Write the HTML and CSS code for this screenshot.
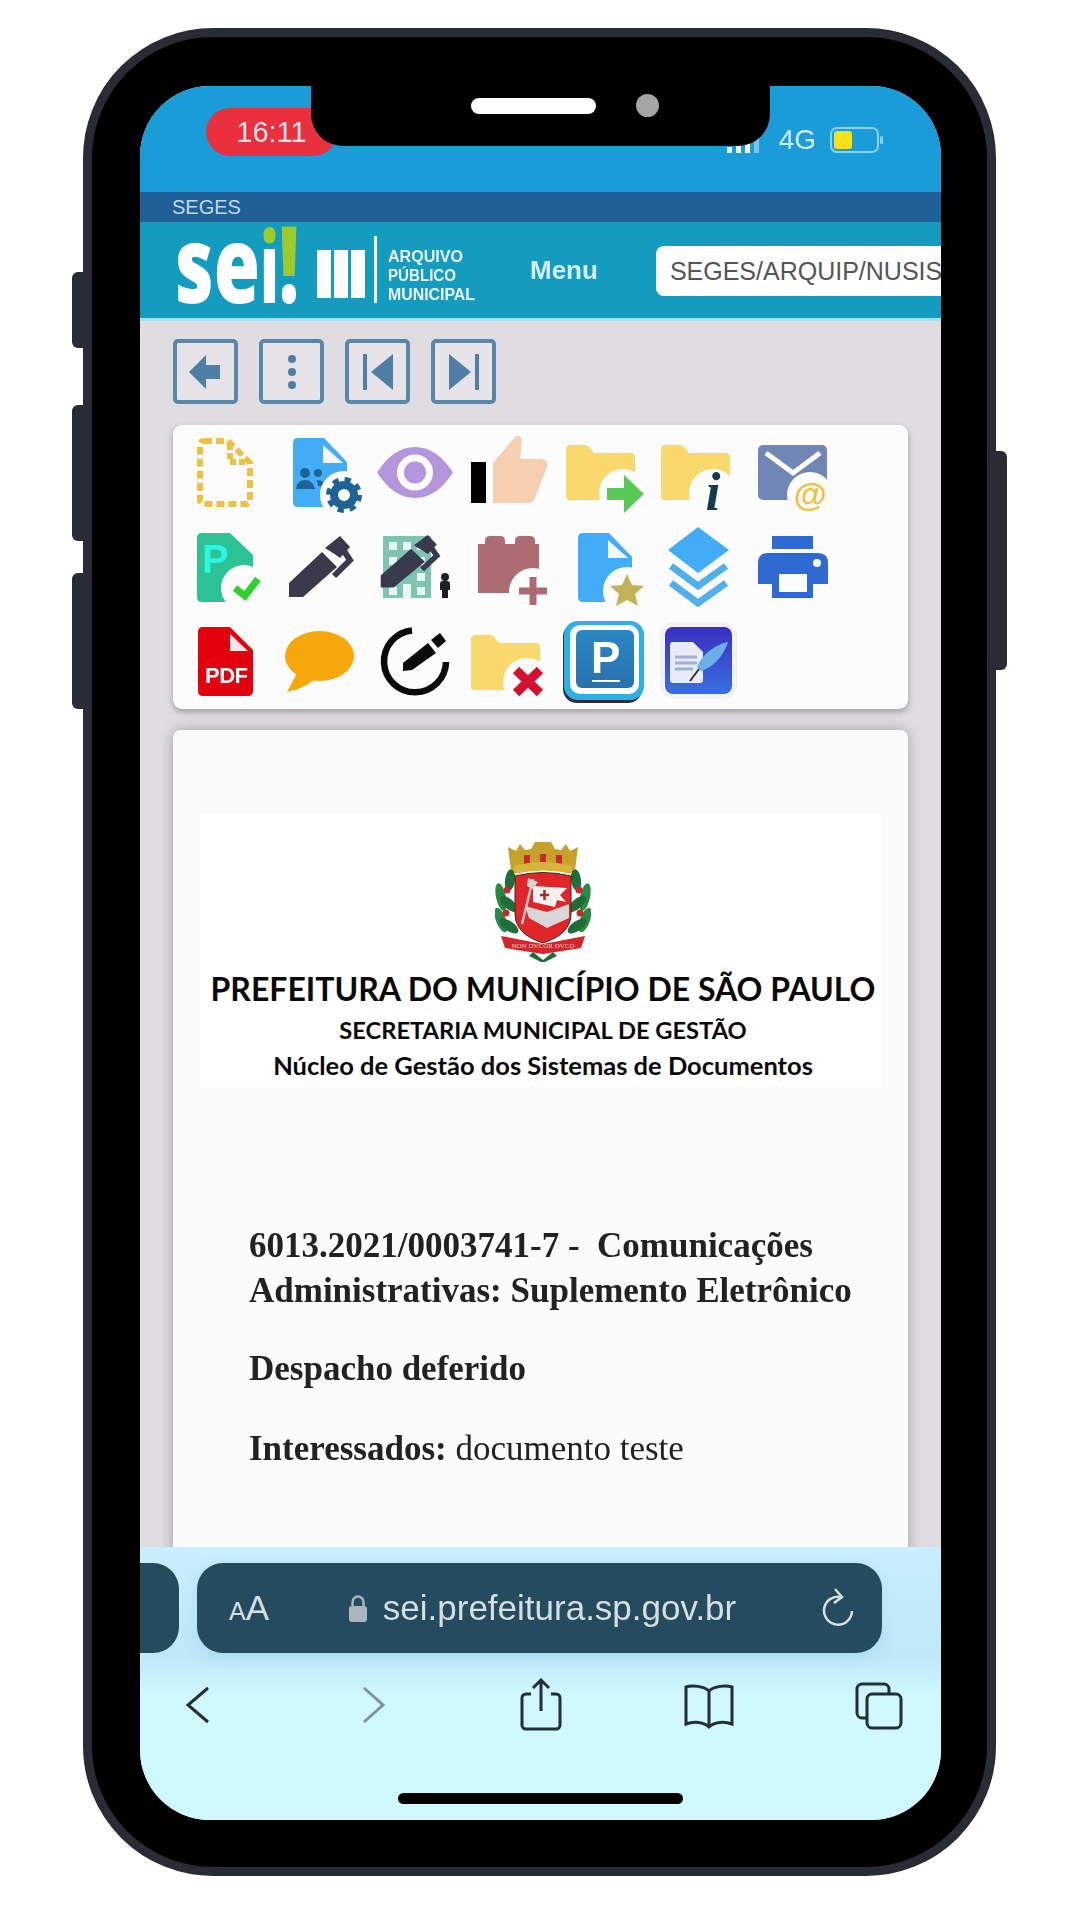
FILE: index.html
```html
<!DOCTYPE html>
<html lang="pt-BR">
<head>
  <meta charset="UTF-8">
  <meta name="viewport" content="width=device-width, initial-scale=1.0">
  <title>SEI - Prefeitura de São Paulo</title>
  <link rel="stylesheet" href="styles.css">
</head>
<body>
<svg class="defs">
  <defs>
    <g id="folder">
      <path d="M8 20q0-4 4-4H27q3 0 5 3l4 5H73q4 0 4 4V67q0 4-4 4H12q-4 0-4-4Z" fill="#f9d96c"/>
    </g>
    <g id="doc-blue">
      <path d="M20 14q0-5 5-5H51L74 33V73q0 5-5 5H25q-5 0-5-5Z" fill="#42acf7"/>
      <path d="M50 16 70 34H50Z" fill="#f4f8fd"/>
    </g>
    <g id="pen">
      <path d="M16 61 49 30 64 45 30 75H16Z" fill="#393a4b"/>
      <path d="M52 26 67 14 77 25 67 36 63 33Z" fill="#393a4b"/>
      <path d="M71 29 77 38 61 54" fill="none" stroke="#393a4b" stroke-width="6"/>
    </g>
    <g id="leaves">
      <ellipse cx="15" cy="38" rx="5" ry="11" fill="#1f6e3a" transform="rotate(8 15 38)"/>
      <ellipse cx="6" cy="55" rx="5" ry="14" fill="#2a8a45" transform="rotate(-12 6 55)"/>
      <ellipse cx="14" cy="62" rx="5" ry="11" fill="#1f6e3a" transform="rotate(-50 14 62)"/>
      <ellipse cx="6" cy="78" rx="5" ry="13" fill="#2a8a45" transform="rotate(-20 6 78)"/>
      <ellipse cx="14" cy="84" rx="5" ry="11" fill="#1f6e3a" transform="rotate(-55 14 84)"/>
      <circle cx="12" cy="48" r="3.500" fill="#c8282c"/>
      <circle cx="11" cy="71" r="3.500" fill="#c8282c"/>
    </g>
  </defs>
</svg>

<div class="phone">
  <span class="side-btn btn-mute"></span>
  <span class="side-btn btn-vol-up"></span>
  <span class="side-btn btn-vol-down"></span>
  <span class="side-btn btn-power"></span>

  <div class="screen">
    <div class="notch">
      <span class="speaker"></span>
      <span class="camera"></span>
    </div>

    <div class="status-bar">
      <span class="time-pill">16:11</span>
      <div class="status-right">
        <svg class="signal" width="38" height="26" viewBox="0 0 38 26">
          <rect x="0" y="20" width="5" height="6" fill="#e8f4fa"/>
          <rect x="9" y="16" width="5" height="10" fill="#e8f4fa"/>
          <rect x="18" y="11" width="5" height="15" fill="#e8f4fa"/>
          <rect x="27" y="5" width="5" height="21" fill="#7cc4e6"/>
        </svg>
        <span class="net">4G</span>
        <svg class="battery" width="54" height="26" viewBox="0 0 54 26">
          <rect x="1" y="1" width="47" height="24" rx="6" fill="none" stroke="#8fcfe8" stroke-width="2"/>
          <rect x="4" y="4" width="18" height="18" rx="3" fill="#f6e11c"/>
          <rect x="50" y="9" width="3" height="8" rx="1.500" fill="#8fcfe8"/>
        </svg>
      </div>
    </div>

    <div class="org-bar">SEGES</div>

    <header class="site-header">
      <svg class="logo" width="300" height="80" viewBox="0 0 300 80">
        <defs>
          <linearGradient id="iFill" gradientUnits="userSpaceOnUse" x1="0" y1="0" x2="0" y2="80">
            <stop offset="0.23" stop-color="#9dcb2a"/>
            <stop offset="0.23" stop-color="#fff"/>
          </linearGradient>
          <linearGradient id="bangFill" gradientUnits="userSpaceOnUse" x1="0" y1="0" x2="0" y2="80">
            <stop offset="0.71" stop-color="#9dcb2a"/>
            <stop offset="0.71" stop-color="#fff"/>
          </linearGradient>
        </defs>
        <text x="-1" y="76" class="logo-sei" fill="#fff" textLength="85" lengthAdjust="spacingAndGlyphs">se</text>
        <text x="84" y="76" class="logo-sei logo-i" fill="url(#iFill)" textLength="19" lengthAdjust="spacingAndGlyphs">i</text>
        <text x="103" y="76" class="logo-sei" fill="url(#bangFill)" textLength="20" lengthAdjust="spacingAndGlyphs">!</text>
        <rect x="141" y="23" width="14" height="48" fill="#fff"/>
        <rect x="158" y="23" width="14" height="48" fill="#fff"/>
        <rect x="175" y="23" width="14" height="48" fill="#fff"/>
        <rect x="198" y="9" width="3" height="67" fill="#fff"/>
        <text x="212" y="35" class="logo-sub" textLength="75" lengthAdjust="spacingAndGlyphs">ARQUIVO</text>
        <text x="212" y="54" class="logo-sub" textLength="68" lengthAdjust="spacingAndGlyphs">PÚBLICO</text>
        <text x="212" y="73" class="logo-sub" textLength="87" lengthAdjust="spacingAndGlyphs">MUNICIPAL</text>
      </svg>
      <span class="menu-link">Menu</span>
      <div class="unit-select">SEGES/ARQUIP/NUSIS</div>
    </header>

    <main class="content">
      <nav class="nav-btns">
        <a class="nav-btn">
          <svg width="40" height="40" viewBox="0 0 40 40"><path d="M3 20 20 3V13H34V27H20V37Z" fill="#4f7fa6"/></svg>
        </a>
        <a class="nav-btn">
          <svg width="40" height="40" viewBox="0 0 40 40"><circle cx="20" cy="7" r="4" fill="#4f7fa6"/><circle cx="20" cy="20" r="4" fill="#4f7fa6"/><circle cx="20" cy="33" r="4" fill="#4f7fa6"/></svg>
        </a>
        <a class="nav-btn">
          <svg width="40" height="40" viewBox="0 0 40 40"><rect x="5" y="2" width="4" height="36" fill="#4f7fa6"/><path d="M35 2V38L13 20Z" fill="#4f7fa6"/></svg>
        </a>
        <a class="nav-btn">
          <svg width="40" height="40" viewBox="0 0 40 40"><path d="M5 2V38L27 20Z" fill="#4f7fa6"/><rect x="31" y="2" width="4" height="36" fill="#4f7fa6"/></svg>
        </a>
      </nav>

      <section class="toolbar">
        <svg class="tool" viewBox="0 0 95 93"><path d="M26 12H50L72 34V71q0 4-4 4H26q-4 0-4-4V16q0-4 4-4Z" fill="none" stroke="#eec23f" stroke-width="6" stroke-dasharray="8 4"/><path d="M52 15V33H69" fill="none" stroke="#eec23f" stroke-width="6" stroke-dasharray="6 3"/></svg>

        <svg class="tool" viewBox="0 0 95 93">
          <use href="#doc-blue"/>
          <circle cx="32" cy="44" r="5" fill="#1f6396"/><circle cx="45" cy="44" r="4" fill="#1f6396"/>
          <path d="M23 60q1-9 9-9t10 9ZM44 51q7 0 9 6H45Z" fill="#1f6396"/>
          <circle cx="71" cy="66" r="24" fill="#fcfcfd"/>
          <circle cx="71" cy="66" r="10" fill="none" stroke="#1f6396" stroke-width="8"/>
          <circle cx="71" cy="66" r="15.500" fill="none" stroke="#1f6396" stroke-width="5" stroke-dasharray="6.200 6"/>
        </svg>

        <svg class="tool" viewBox="0 0 95 93">
          <path d="M9 43.500C20 26 33 18 47 18C61 18 74 26 85 43.500C74 61 61 69 47 69C33 69 20 61 9 43.500Z" fill="#b496dc"/>
          <circle cx="47" cy="43.500" r="18" fill="#fcfcfd"/><circle cx="47" cy="43.500" r="11" fill="#b496dc"/>
        </svg>

        <svg class="tool" viewBox="0 0 95 93">
          <rect x="8" y="33" width="15" height="41" fill="#000"/>
          <path d="M30 34 52 8Q57 5 59 11L57 30H76Q86 30 84 38L72 69Q70 74 65 74H30Z" fill="#f5cfb0"/>
        </svg>

        <svg class="tool" viewBox="0 0 95 93">
          <use href="#folder"/><circle cx="65" cy="64" r="24" fill="#fcfcfd"/>
          <path d="M49 59H66V46L86 65 66 84V71H49Z" fill="#57c957"/>
        </svg>

        <svg class="tool" viewBox="0 0 95 93">
          <use href="#folder"/><circle cx="60" cy="64" r="24" fill="#fcfcfd"/>
          <text x="60" y="81" class="glyph-i">i</text>
        </svg>

        <svg class="tool" viewBox="0 0 95 93">
          <rect x="10" y="16" width="69" height="55" rx="5" fill="#7087b5"/>
          <path d="M18 24 45 44 72 24" fill="none" stroke="#fff" stroke-width="5"/>
          <circle cx="62" cy="66" r="23" fill="#fcfcfd"/>
          <text x="62" y="77" class="glyph-at">@</text>
        </svg>

        <svg class="tool" viewBox="0 0 95 93">
          <path d="M19 16q0-5 5-5H52L75 33V75q0 5-5 5H24q-5 0-5-5Z" fill="#2dc295"/>
          <text x="24" y="51" class="glyph-p">P</text>
          <circle cx="66" cy="66" r="23" fill="#fcfcfd"/>
          <path d="M57 66 67 74 80 57" fill="none" stroke="#30d030" stroke-width="7"/>
        </svg>

        <svg class="tool" viewBox="0 0 95 93"><use href="#pen"/></svg>

        <svg class="tool" viewBox="0 0 95 93">
          <rect x="15" y="14" width="48" height="62" fill="#7dc4b3"/>
          <g fill="#e8f5f1">
            <rect x="21" y="20" width="8" height="8"/><rect x="35" y="20" width="8" height="8"/><rect x="49" y="20" width="8" height="8"/>
            <rect x="21" y="35" width="8" height="8"/><rect x="35" y="35" width="8" height="8"/><rect x="49" y="35" width="8" height="8"/>
            <rect x="21" y="51" width="8" height="8"/><rect x="49" y="51" width="8" height="8"/>
            <rect x="21" y="65" width="8" height="8"/><rect x="35" y="62" width="8" height="14"/><rect x="49" y="65" width="8" height="8"/>
          </g>
          <g transform="translate(-2 1) scale(.92 .86)"><use href="#pen"/></g>
          <circle cx="77" cy="55" r="4" fill="#1d1e26"/>
          <path d="M72 62q0-3 3-3h4q3 0 3 3v6h-2v8h-6v-8h-2Z" fill="#1d1e26"/>
        </svg>

        <svg class="tool" viewBox="0 0 95 93">
          <path d="M15 22H22V19q0-5 5-5H37q5 0 5 5v3H52V19q0-5 5-5H67q5 0 5 5v3h4V71H15Z" fill="#ac6d72"/>
          <circle cx="70" cy="70" r="24" fill="#fcfcfd"/>
          <path d="M56 69H84M70 55V83" stroke="#ac6d72" stroke-width="7"/>
        </svg>

        <svg class="tool" viewBox="0 0 95 93">
          <use href="#doc-blue" y="2"/>
          <circle cx="69" cy="69" r="24" fill="#fcfcfd"/>
          <path d="M69 52 74 63 86 64 77 72 80 84 69 78 58 84 61 72 52 64 64 63Z" fill="#c2b258"/>
        </svg>

        <svg class="tool" viewBox="0 0 95 93">
          <path d="M45 5 76 28 45 51 15 28Z" fill="#42acf7"/>
          <path d="M18 44 45 64 73 44M18 61 45 81 73 61" fill="none" stroke="#4fb0ea" stroke-width="7"/>
        </svg>

        <svg class="tool" viewBox="0 0 95 93">
          <rect x="24" y="14" width="41" height="13" fill="#2e6ad1"/>
          <path d="M10 41q0-10 10-10H70q10 0 10 10V62H65V76H24V62H10Z" fill="#2e6ad1"/>
          <rect x="31" y="52" width="28" height="18" fill="#fcfcfd"/>
          <circle cx="69" cy="41" r="4" fill="#fcfcfd"/>
        </svg>

        <svg class="tool" viewBox="0 0 95 93">
          <path d="M20 17q0-5 5-5H52L75 35V76q0 5-5 5H25q-5 0-5-5Z" fill="#e2000f"/>
          <path d="M52 19 70 36H52Z" fill="#f7e6e6"/>
          <text x="27" y="68" class="glyph-pdf" textLength="43">PDF</text>
        </svg>

        <svg class="tool" viewBox="0 0 95 93">
          <ellipse cx="46.500" cy="41" rx="34.500" ry="25" fill="#f5a70b"/>
          <path d="M24 58 14 77Q30 74 42 64Z" fill="#f5a70b"/>
        </svg>

        <svg class="tool" viewBox="0 0 95 93">
          <path d="M44 15.500A31 31 0 1 0 78 47" fill="none" stroke="#0a0a0a" stroke-width="6.500"/>
          <path d="M35 48 60 28 68 38 44 55 35 56Z" fill="#0a0a0a"/>
          <path d="M63 25 72 18 78 26 70 33Z" fill="#0a0a0a"/>
        </svg>

        <svg class="tool" viewBox="0 0 95 93">
          <g transform="translate(0 4)"><use href="#folder"/></g>
          <circle cx="64" cy="67" r="24" fill="#fcfcfd"/>
          <path d="M53 55 77 78M77 55 53 78" stroke="#d4112f" stroke-width="9"/>
        </svg>

        <svg class="tool" viewBox="0 0 95 93">
          <defs><linearGradient id="pBlue" x1="0" y1="0" x2="0" y2="1"><stop offset="0" stop-color="#2b88c4"/><stop offset="1" stop-color="#2871ac"/></linearGradient></defs>
          <rect x="5" y="8" width="79" height="80" rx="14" fill="#2b2e35"/>
          <rect x="6" y="6" width="80" height="79" rx="14" fill="#2cb0e8"/>
          <rect x="12" y="10" width="69" height="69" rx="10" fill="#fff"/>
          <rect x="18" y="15" width="58" height="58" rx="6" fill="url(#pBlue)"/>
          <text x="33" y="58" class="glyph-pw">P</text>
          <rect x="34" y="65" width="28" height="2" fill="#fff"/>
        </svg>

        <svg class="tool" viewBox="0 0 95 93">
          <defs><linearGradient id="qBlue" x1="0" y1="0" x2="0" y2="1"><stop offset="0" stop-color="#3a2fc0"/><stop offset="1" stop-color="#3a6fe0"/></linearGradient></defs>
          <rect x="7" y="7" width="77" height="77" rx="14" fill="#f1f1f6"/>
          <rect x="12" y="12" width="67" height="67" rx="8" fill="url(#qBlue)"/>
          <path d="M17 30q0-3 3-3H40L50 37V65q0 3-3 3H20q-3 0-3-3Z" fill="#e8ecf8"/>
          <path d="M22 42H44M22 48H44M22 54H40" stroke="#9fb0d8" stroke-width="3"/>
          <path d="M75 27C62 30 50 38 44 52L48 56C60 52 70 42 75 27Z" fill="#6ab0e8"/>
          <path d="M46 54 37 66" stroke="#333" stroke-width="2"/>
        </svg>
      </section>

      <article class="doc">
        <div class="letterhead">
          <svg class="crest" width="96" height="120" viewBox="0 0 96 120">
            <use href="#leaves"/>
            <g transform="translate(96 0) scale(-1 1)"><use href="#leaves"/></g>
            <path d="M38 110 48 118 58 110 62 114 50 120H46L34 114Z" fill="#1f6e3a"/>
            <path d="M16 28 13 5 21 9 25 2 30 8 36 7 40 0H56L60 7 66 8 71 2 75 9 83 5 80 28Z" fill="#c8a12a"/>
            <rect x="29" y="13" width="6" height="9" fill="#c8282c"/><rect x="45" y="12" width="6" height="10" fill="#c8282c"/><rect x="61" y="13" width="6" height="9" fill="#c8282c"/>
            <path d="M19 24Q48 16 77 24V32Q48 25 19 32Z" fill="#d8b53a"/>
            <path d="M20 34Q48 27 76 34V72Q76 92 48 101 20 92 20 72Z" fill="#e0262a" stroke="#3a2a1a" stroke-width="1"/>
            <path d="M38 44 72 46 65 53 71 60 62 58 60 65 38 60Z" fill="#f4f2f0"/>
            <path d="M45 53H54M49.500 48V58" stroke="#b5222a" stroke-width="2.500"/>
            <path d="M38 37 27 82" stroke="#c4c4c4" stroke-width="2.500"/>
            <path d="M33 36 43 40 38 47 32 44Z" fill="#d4d4d4"/>
            <path d="M30 64 52 70 74 62V76L52 86 34 76Z" fill="#d8d6d6"/>
            <path d="M6 94 48 102 90 94 86 106 48 112 10 106Z" fill="#d4262a"/>
            <text x="48" y="106" class="crest-motto">NON DVCOR DVCO</text>
          </svg>
          <h1 class="lh-city">PREFEITURA DO MUNICÍPIO DE SÃO PAULO</h1>
          <h2 class="lh-sec">SECRETARIA MUNICIPAL DE GESTÃO</h2>
          <h3 class="lh-unit">Núcleo de Gestão dos Sistemas de Documentos</h3>
        </div>
        <div class="doc-body">
          <p class="doc-title"><strong>6013.2021/0003741-7 -&nbsp; Comunicações Administrativas: Suplemento Eletrônico</strong></p>
          <p class="doc-status"><strong>Despacho deferido</strong></p>
          <p class="doc-people"><strong>Interessados:</strong> documento teste</p>
        </div>
      </article>
    </main>

    <footer class="browser">
      <div class="url-row">
        <div class="prev-tab"></div>
        <div class="url-bar">
          <span class="aa"><small>A</small>A</span>
          <div class="url-center">
            <svg width="20" height="28" viewBox="0 0 20 28"><path d="M4.500 12V8a5.500 5.500 0 0 1 11 0v4" fill="none" stroke="#a9b6bd" stroke-width="2.500"/><rect x="1" y="12" width="18" height="16" rx="3" fill="#a9b6bd"/></svg>
            <span class="url-text">sei.prefeitura.sp.gov.br</span>
          </div>
          <svg class="reload" width="34" height="40" viewBox="0 0 34 40"><path d="M20 9A14 14 0 1 0 31 23" fill="none" stroke="#d6dfe2" stroke-width="2.500"/><path d="M14 1 21 9 13 15" fill="none" stroke="#d6dfe2" stroke-width="2.500"/></svg>
        </div>
      </div>
      <div class="browser-nav">
        <svg width="50" height="50" viewBox="0 0 50 50"><path d="M35 8 15 25 35 42" fill="none" stroke="#222f35" stroke-width="3"/></svg>
        <svg width="50" height="50" viewBox="0 0 50 50"><path d="M21 8 40 25 21 42" fill="none" stroke="#7f9498" stroke-width="3"/></svg>
        <svg width="50" height="50" viewBox="0 0 50 50"><path d="M17 14H12a4 4 0 0 0-4 4V45a4 4 0 0 0 4 4H42a4 4 0 0 0 4-4V18a4 4 0 0 0-4-4H37M27 31V1M19 8 27 0 35 8" fill="none" stroke="#222f35" stroke-width="3"/></svg>
        <svg width="50" height="50" viewBox="0 0 50 50"><path d="M25 11C20 6 8 5 2 7V44C10 41 20 42 25 47 30 42 40 41 48 44V7C42 5 30 6 25 11ZM25 11V47" fill="none" stroke="#222f35" stroke-width="3"/></svg>
        <svg width="50" height="50" viewBox="0 0 50 50"><path d="M13 38H8a5 5 0 0 1-5-5V9a5 5 0 0 1 5-5H30a5 5 0 0 1 5 5v5" fill="none" stroke="#222f35" stroke-width="3"/><rect x="13" y="14" width="34" height="34" rx="5" fill="none" stroke="#222f35" stroke-width="3"/></svg>
      </div>
      <div class="home-indicator"></div>
    </footer>
  </div>
</div>
</body>
</html>
```

FILE: styles.css
```css
* {
  box-sizing: border-box;
}

body {
  margin: 0;
  background-color: #fff;
  font-family: "Liberation Sans", Arial, sans-serif;
}

.defs {
  display: block;
  width: 0;
  height: 0;
}

.phone {
  position: relative;
  width: 913px;
  height: 1848px;
  margin: 28px 0 0 83px;
  padding: 49px 46px 47px 48px;
  background-color: #000;
  border: 9px solid #2a2c35;
  border-radius: 130px;
}

.side-btn {
  position: absolute;
  width: 12px;
  background-color: #2a2c35;
}

.btn-mute { left: -20px; top: 235px; height: 76px; border-radius: 6px 0 0 6px; }
.btn-vol-up { left: -20px; top: 368px; height: 136px; border-radius: 6px 0 0 6px; }
.btn-vol-down { left: -20px; top: 536px; height: 136px; border-radius: 6px 0 0 6px; }
.btn-power { right: -20px; top: 414px; height: 219px; border-radius: 0 6px 6px 0; }

.screen {
  position: relative;
  display: flex;
  flex-direction: column;
  width: 801px;
  height: 1734px;
  overflow: hidden;
  border-radius: 70px;
  background-color: #dfdde1;
}

.notch {
  position: absolute;
  left: 171px;
  top: 0;
  z-index: 5;
  width: 459px;
  height: 60px;
  background-color: #000;
  border-radius: 0 0 32px 32px;
}

.speaker {
  position: absolute;
  left: 160px;
  top: 12px;
  width: 125px;
  height: 16px;
  background-color: #fff;
  border-radius: 8px;
}

.camera {
  position: absolute;
  left: 325px;
  top: 8px;
  width: 23px;
  height: 23px;
  background-color: #a5a5a5;
  border-radius: 50%;
}

.status-bar {
  display: flex;
  justify-content: space-between;
  height: 106px;
  padding: 22px 57px 0 66px;
  background-color: #1a9cd8;
}

.time-pill {
  width: 131px;
  height: 48px;
  line-height: 48px;
  text-align: center;
  font-size: 29px;
  color: #f5e4e6;
  background-color: #e8303f;
  border-radius: 24px;
  filter: blur(0.5px);
}

.status-right {
  display: flex;
  align-items: center;
  gap: 14px;
  height: 64px;
  filter: blur(0.5px);
}

.net {
  font-size: 28px;
  color: #d5ecf5;
}

.org-bar {
  height: 30px;
  padding-left: 32px;
  line-height: 30px;
  font-size: 20px;
  color: #c5d8e5;
  background-color: #1f6098;
}

.site-header {
  display: flex;
  height: 99px;
  padding-left: 36px;
  background-color: #139cc0;
  border-bottom: 3px solid #a9dfec;
}

.logo {
  flex-shrink: 0;
  margin-top: 5px;
  overflow: visible;
  filter: blur(0.6px);
}

.logo-sei {
  font-family: "Open Sans", sans-serif;
  font-weight: 800;
  font-size: 106px;
}

.logo-i {
  font-size: 98px;
}

.logo-sub {
  font-family: "Liberation Sans", sans-serif;
  font-weight: 700;
  font-size: 16px;
  fill: #eaf6f9;
}

.menu-link {
  margin: 33px 0 0 54px;
  font-size: 26px;
  font-weight: 700;
  color: #d5edf2;
  filter: blur(0.4px);
}

.unit-select {
  flex: 1;
  min-width: 0;
  height: 50px;
  margin: 24px 0 0 58px;
  padding-left: 14px;
  overflow: hidden;
  white-space: nowrap;
  line-height: 50px;
  font-size: 25px;
  color: #555;
  background-color: #fff;
  border-radius: 8px 0 0 8px;
}

.content {
  flex: 1;
  min-height: 0;
  overflow: hidden;
  padding: 18px 33px 0;
}

.nav-btns {
  display: flex;
  gap: 21px;
  filter: blur(0.6px);
}

.nav-btn {
  display: flex;
  align-items: center;
  justify-content: center;
  width: 65px;
  height: 65px;
  background-color: #e6e4e8;
  border: 4px solid #5a86a8;
  border-radius: 5px;
}

.toolbar {
  display: grid;
  grid-template-columns: repeat(7, 95px);
  grid-auto-rows: 93px;
  height: 284px;
  margin-top: 21px;
  padding: 4px 5px;
  background-color: #fcfcfd;
  border-radius: 9px;
  box-shadow: 0 3px 6px rgba(0, 0, 0, 0.3);
}

.tool {
  display: block;
  width: 95px;
  height: 93px;
  overflow: visible;
  filter: blur(0.6px);
}

.glyph-i {
  font-family: "Liberation Serif", serif;
  font-style: italic;
  font-weight: 700;
  font-size: 54px;
  text-anchor: middle;
  fill: #173b4d;
}

.glyph-at {
  font-weight: 700;
  font-size: 34px;
  text-anchor: middle;
  fill: #eec23f;
}

.glyph-p {
  font-weight: 700;
  font-size: 40px;
  fill: #2cf5e0;
}

.glyph-pdf {
  font-weight: 700;
  font-size: 22px;
  fill: #fff;
}

.glyph-pw {
  font-weight: 700;
  font-size: 44px;
  fill: #fff;
}

.doc {
  flex-shrink: 0;
  min-height: 900px;
  margin-top: 21px;
  padding: 85px 26px 0 27px;
  background-color: #fcfbfc;
  border-radius: 8px;
  box-shadow: 0 0 14px rgba(0, 0, 0, 0.28);
}

.letterhead {
  height: 271px;
  padding: 27px 0 0 4px;
  text-align: center;
  background-color: #fff;
  color: #0a0a0a;
  font-family: Lato, sans-serif;
}

.crest {
  display: block;
  margin: 0 auto;
  filter: blur(0.4px);
}

.crest-motto {
  font-family: "Liberation Serif", serif;
  font-size: 7px;
  text-anchor: middle;
  fill: #f2d0d0;
}

.lh-city {
  margin: 10px 0 0;
  line-height: 34px;
  font-size: 32px;
  font-weight: 700;
}

.lh-sec {
  margin: 6px 0 0;
  line-height: 36px;
  font-size: 23.700px;
  font-weight: 700;
}

.lh-unit {
  margin: -1px 0 0;
  line-height: 36px;
  font-size: 25.500px;
  font-weight: 700;
}

.doc-body {
  padding: 137px 10px 0 49px;
  font-family: "Liberation Serif", serif;
  font-size: 35px;
  line-height: 45px;
  color: #222;
  filter: blur(0.6px);
}

.doc-body p {
  margin: 0;
}

.doc-status {
  padding-top: 33px;
}

.doc-people {
  padding-top: 35px;
}

.browser {
  flex-shrink: 0;
  position: relative;
  height: 273px;
  padding-top: 16px;
  background: linear-gradient(#c9eefc 0, #bfe8f8 40%, #cff9fd 55%, #cef8fc 100%);
}

.url-row {
  display: flex;
  gap: 18px;
  height: 90px;
}

.prev-tab {
  width: 39px;
  background-color: #244b5e;
  border-radius: 0 26px 26px 0;
}

.url-bar {
  display: flex;
  align-items: center;
  justify-content: space-between;
  width: 685px;
  padding: 0 27px 0 32px;
  background-color: #244b5e;
  border-radius: 26px;
  color: #d6dfe2;
  box-shadow: 0 6px 16px rgba(120, 190, 230, 0.3);
}

.aa {
  font-size: 35px;
}

.aa small {
  font-size: 25px;
}

.url-center {
  display: flex;
  align-items: center;
  gap: 15px;
  margin-right: 6px;
}

.url-text {
  font-size: 35px;
  filter: blur(0.4px);
}

.browser-nav {
  display: flex;
  justify-content: space-between;
  height: 50px;
  margin-top: 27px;
  padding: 0 37px 0 33px;
}

.browser-nav svg {
  overflow: visible;
}

.home-indicator {
  width: 285px;
  height: 11px;
  margin: 63px auto 0;
  background-color: #000;
  border-radius: 6px;
}
```
